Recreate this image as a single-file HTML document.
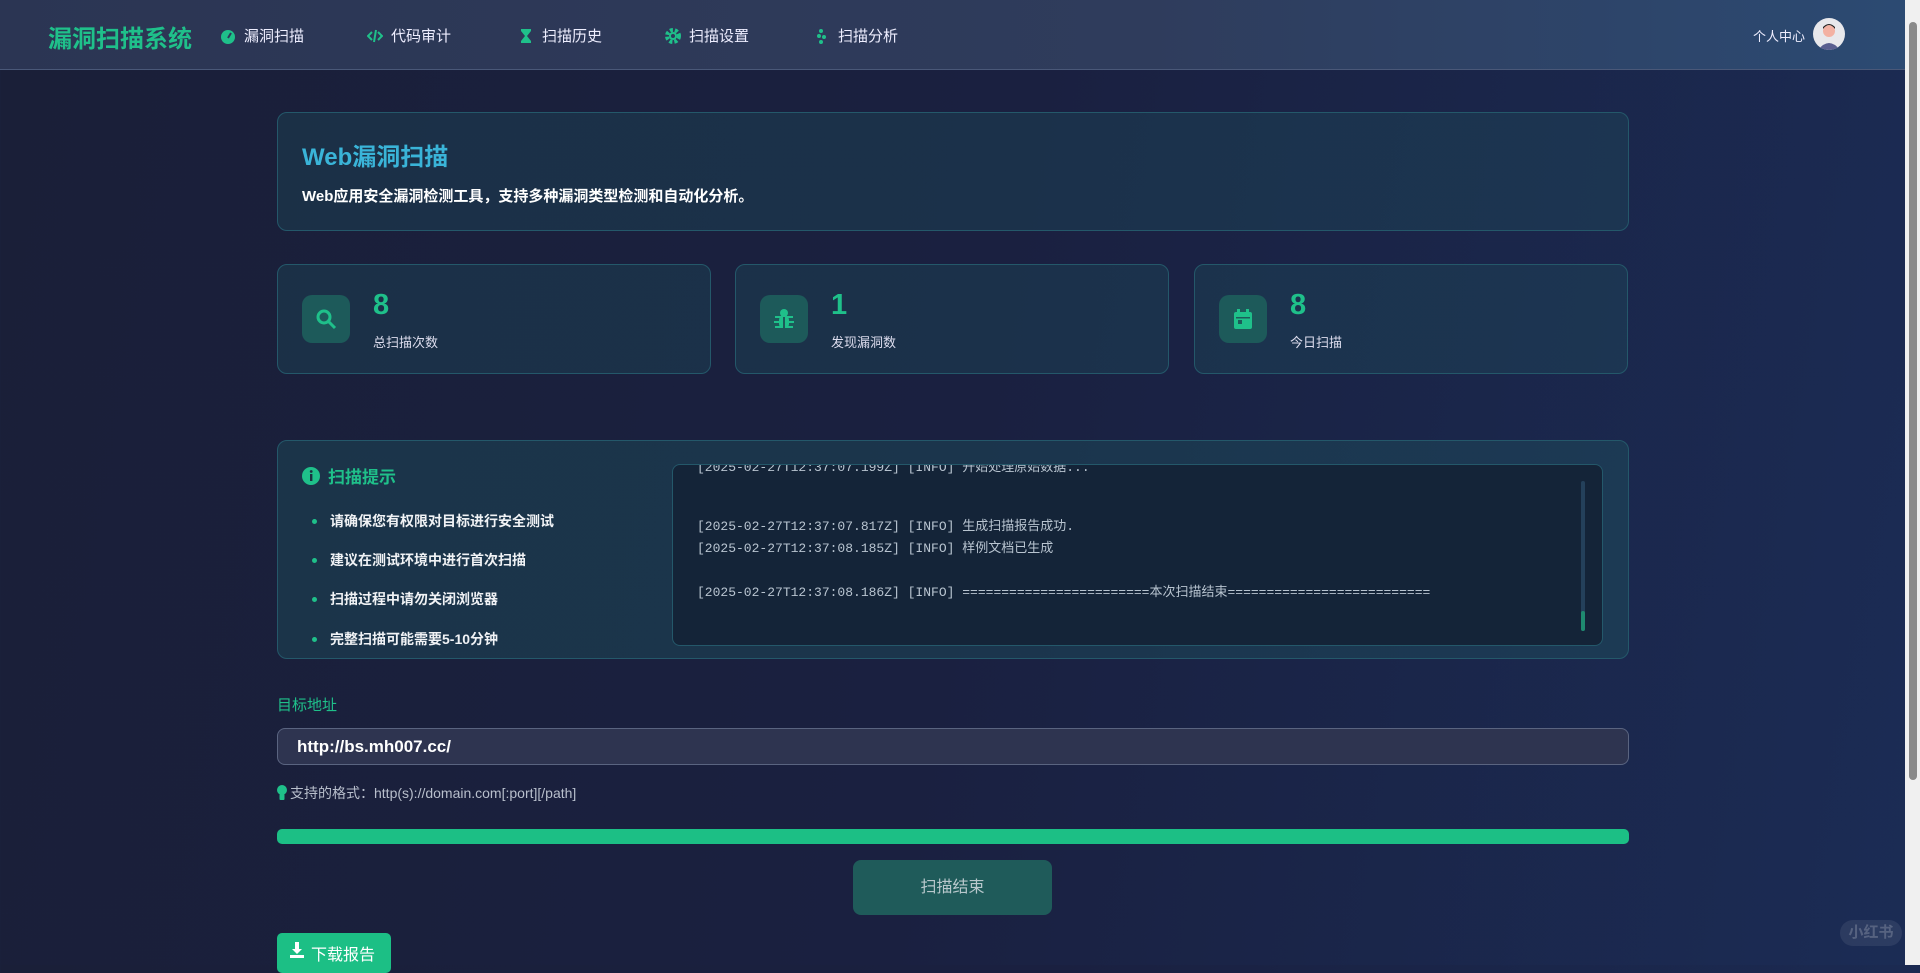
<!DOCTYPE html>
<html><head><meta charset="utf-8"><style>
*{box-sizing:border-box;margin:0;padding:0}
body{width:1920px;height:965px;overflow:hidden;font-family:"Liberation Sans","Noto Sans CJK SC",sans-serif;color:#e6e9f0;background:linear-gradient(100deg,#1a1f38 0%,#1a2040 50%,#1b2c55 100%);position:relative}
.hdr{position:absolute;left:0;top:0;width:1905px;height:70px;background:linear-gradient(90deg,#2b3553,#2f3c5c 60%,#2c4a72);border-bottom:1px solid #4a5878}
.logo{position:absolute;left:48px;top:19px;font-size:24px;font-weight:bold;color:#1fc08a}
.nav{position:absolute;top:25px;font-size:15px;color:#eef;display:flex;align-items:center;gap:8px}
.nav svg{width:16px;height:16px}
.user{position:absolute;left:1753px;top:26px;font-size:13px;color:#eef}
.av{position:absolute;left:1813px;top:18px;width:32px;height:32px;border-radius:50%;background:#e8e8ec;overflow:hidden}
.card{position:absolute;border:1px solid #24586a;border-radius:10px;background:rgba(30,75,90,.4)}
.sb{position:absolute;left:1905px;top:0;width:15px;height:965px;background:#f0f0f0}
.sb div{position:absolute;left:4px;top:22px;width:8px;height:758px;background:#8a8a8a;border-radius:4px}
.ico{position:absolute;left:24px;top:30px;width:48px;height:48px;border-radius:10px;background:#1d5a5a;display:flex;align-items:center;justify-content:center}
.num{position:absolute;left:95px;top:24px;font-size:29px;font-weight:bold;color:#1fc08a}
.lab{position:absolute;left:95px;top:67px;font-size:13px;color:#dde}
.tips li{list-style:none;position:absolute;left:52px;font-size:14px;font-weight:bold;color:#f0f2f5}
.tips li:before{content:"";position:absolute;left:-18px;top:8px;width:5px;height:5px;border-radius:50%;background:#1fc08a}
.log{position:absolute;left:672px;top:464px;width:931px;height:182px;border:1px solid #24586a;border-radius:8px;background:#142438;overflow:hidden;font-family:"Liberation Mono","Noto Sans CJK SC",monospace;font-size:13px;color:#b8c4d0}
.log p{position:absolute;left:24px;white-space:pre}
</style></head><body>
<div class="hdr">
<div class="logo">漏洞扫描系统</div>
<div class="nav" style="left:220px"><svg viewBox="0 0 16 16"><circle cx="8" cy="9" r="7" fill="#1fc08a"/><path d="M8 10L11 5" stroke="#2d3a5a" stroke-width="2"/></svg>漏洞扫描</div>
<div class="nav" style="left:367px"><svg viewBox="0 0 16 16" fill="none" stroke="#1fc08a" stroke-width="2"><path d="M5 4L1 8l4 4M11 4l4 4-4 4M9 2L7 14"/></svg>代码审计</div>
<div class="nav" style="left:518px"><svg viewBox="0 0 16 16" fill="#1fc08a"><path d="M3 1h10v2l-4 5 4 5v2H3v-2l4-5-4-5z"/></svg>扫描历史</div>
<div class="nav" style="left:665px"><svg viewBox="0 0 16 16"><circle cx="8" cy="8" r="6" fill="none" stroke="#1fc08a" stroke-width="4" stroke-dasharray="3 2"/><circle cx="8" cy="8" r="4" fill="#1fc08a"/><circle cx="8" cy="8" r="2" fill="#2d3a5a"/></svg>扫描设置</div>
<div class="nav" style="left:814px"><svg viewBox="0 0 16 16" fill="#1fc08a"><circle cx="7" cy="3" r="2"/><circle cx="5" cy="8" r="2"/><circle cx="10" cy="9" r="2"/><circle cx="7" cy="14" r="2"/></svg>扫描分析</div>
<div class="user">个人中心</div>
<div class="av"><svg width="32" height="32"><circle cx="16" cy="13" r="6" fill="#f3b1a3"/><path d="M10 11q6-8 12 0v-2q-6-6-12 0z" fill="#222"/><path d="M5 32q11-14 22 0z" fill="#5a5f90"/></svg></div>
</div>
<div class="sb"><div></div></div>

<div class="card" style="left:277px;top:112px;width:1352px;height:119px">
<div style="position:absolute;left:24px;top:24px;font-size:24px;font-weight:bold;color:#3ab4d8">Web漏洞扫描</div>
<div style="position:absolute;left:24px;top:72px;font-size:15px;font-weight:bold;color:#fff">Web应用安全漏洞检测工具，支持多种漏洞类型检测和自动化分析。</div>
</div>

<div class="card" style="left:277px;top:264px;width:434px;height:110px"><div class="ico"><svg width="24" height="24" fill="none" stroke="#1fc08a" stroke-width="3"><circle cx="10" cy="10" r="6"/><path d="M15 15l6 6"/></svg></div><div class="num">8</div><div class="lab">总扫描次数</div></div>
<div class="card" style="left:735px;top:264px;width:434px;height:110px"><div class="ico"><svg width="24" height="24" fill="#1fc08a"><circle cx="12" cy="6" r="4"/><rect x="7" y="9" width="10" height="12" rx="4"/><path d="M3 10h18M2 15h20M3 20h18" stroke="#1fc08a" stroke-width="2"/><path d="M12 10v11" stroke="#1d5a5a" stroke-width="2"/></svg></div><div class="num">1</div><div class="lab">发现漏洞数</div></div>
<div class="card" style="left:1194px;top:264px;width:434px;height:110px"><div class="ico"><svg width="22" height="22" fill="#1fc08a"><rect x="2" y="4" width="18" height="17" rx="2"/><rect x="5" y="1" width="3" height="5"/><rect x="14" y="1" width="3" height="5"/><rect x="4" y="9" width="14" height="1.5" fill="#1d5a5a"/><rect x="6" y="12" width="4" height="4" fill="#1d5a5a"/></svg></div><div class="num">8</div><div class="lab">今日扫描</div></div>

<div class="card tips" style="left:277px;top:440px;width:1352px;height:219px;background:rgba(30,85,95,.4)">
<div style="position:absolute;left:24px;top:22px;font-size:17px;font-weight:bold;color:#1fc08a;display:flex;align-items:center;gap:8px"><svg width="18" height="18"><circle cx="9" cy="9" r="9" fill="#1fc08a"/><rect x="8" y="7" width="2.4" height="7" fill="#1b3040"/><circle cx="9.2" cy="4.5" r="1.4" fill="#1b3040"/></svg>扫描提示</div>
<ul><li style="top:70px">请确保您有权限对目标进行安全测试</li><li style="top:109px">建议在测试环境中进行首次扫描</li><li style="top:148px">扫描过程中请勿关闭浏览器</li><li style="top:188px">完整扫描可能需要5-10分钟</li></ul>
</div>
<div class="log">
<p style="top:-9px">[2025-02-27T12:37:07.199Z] [INFO] 开始处理原始数据...</p>
<p style="top:50px">[2025-02-27T12:37:07.817Z] [INFO] 生成扫描报告成功.</p>
<p style="top:72px">[2025-02-27T12:37:08.185Z] [INFO] 样例文档已生成</p>
<p style="top:116px">[2025-02-27T12:37:08.186Z] [INFO] ========================本次扫描结束==========================</p>
<div style="position:absolute;right:17px;top:16px;width:4px;height:150px;background:#24405a;border-radius:2px"><div style="position:absolute;bottom:0;width:4px;height:20px;background:#1f8a70;border-radius:2px"></div></div>
</div>

<div style="position:absolute;left:277px;top:694px;font-size:15px;color:#1fc08a">目标地址</div>
<div style="position:absolute;left:277px;top:728px;width:1352px;height:37px;border:1px solid #5a6480;border-radius:8px;background:#2e3450;font-size:17px;font-weight:bold;color:#fff;padding:8px 19px">http://bs.mh007.cc/</div>
<div style="position:absolute;left:277px;top:783px;font-size:14px;color:#b8bfcc;display:flex;align-items:center;gap:3px"><svg width="10" height="16"><circle cx="5" cy="5" r="5" fill="#1fc08a"/><rect x="2.5" y="9" width="5" height="6" rx="1" fill="#1fc08a"/></svg>支持的格式：http(s)://domain.com[:port][/path]</div>
<div style="position:absolute;left:277px;top:829px;width:1352px;height:15px;border-radius:5px;background:#1cbf85"></div>
<div style="position:absolute;left:853px;top:860px;width:199px;height:55px;border-radius:8px;background:#1f5b5a;color:#b8c8cc;font-size:16px;text-align:center;line-height:55px">扫描结束</div>
<div style="position:absolute;left:277px;top:933px;width:114px;height:40px;border-radius:5px;background:#1cbf85;color:#fff;font-size:16px;padding:8px 12px;display:flex;gap:6px"><svg width="16" height="18" fill="#fff"><path d="M6 1h4v7h3l-5 5-5-5h3z"/><rect x="1" y="14" width="14" height="3"/></svg>下载报告</div>
<div style="position:absolute;left:1840px;top:920px;width:62px;height:26px;border-radius:13px;background:rgba(255,255,255,.08);color:rgba(255,255,255,.2);font-size:15px;font-weight:bold;text-align:center;line-height:26px">小红书</div>
</body></html>
